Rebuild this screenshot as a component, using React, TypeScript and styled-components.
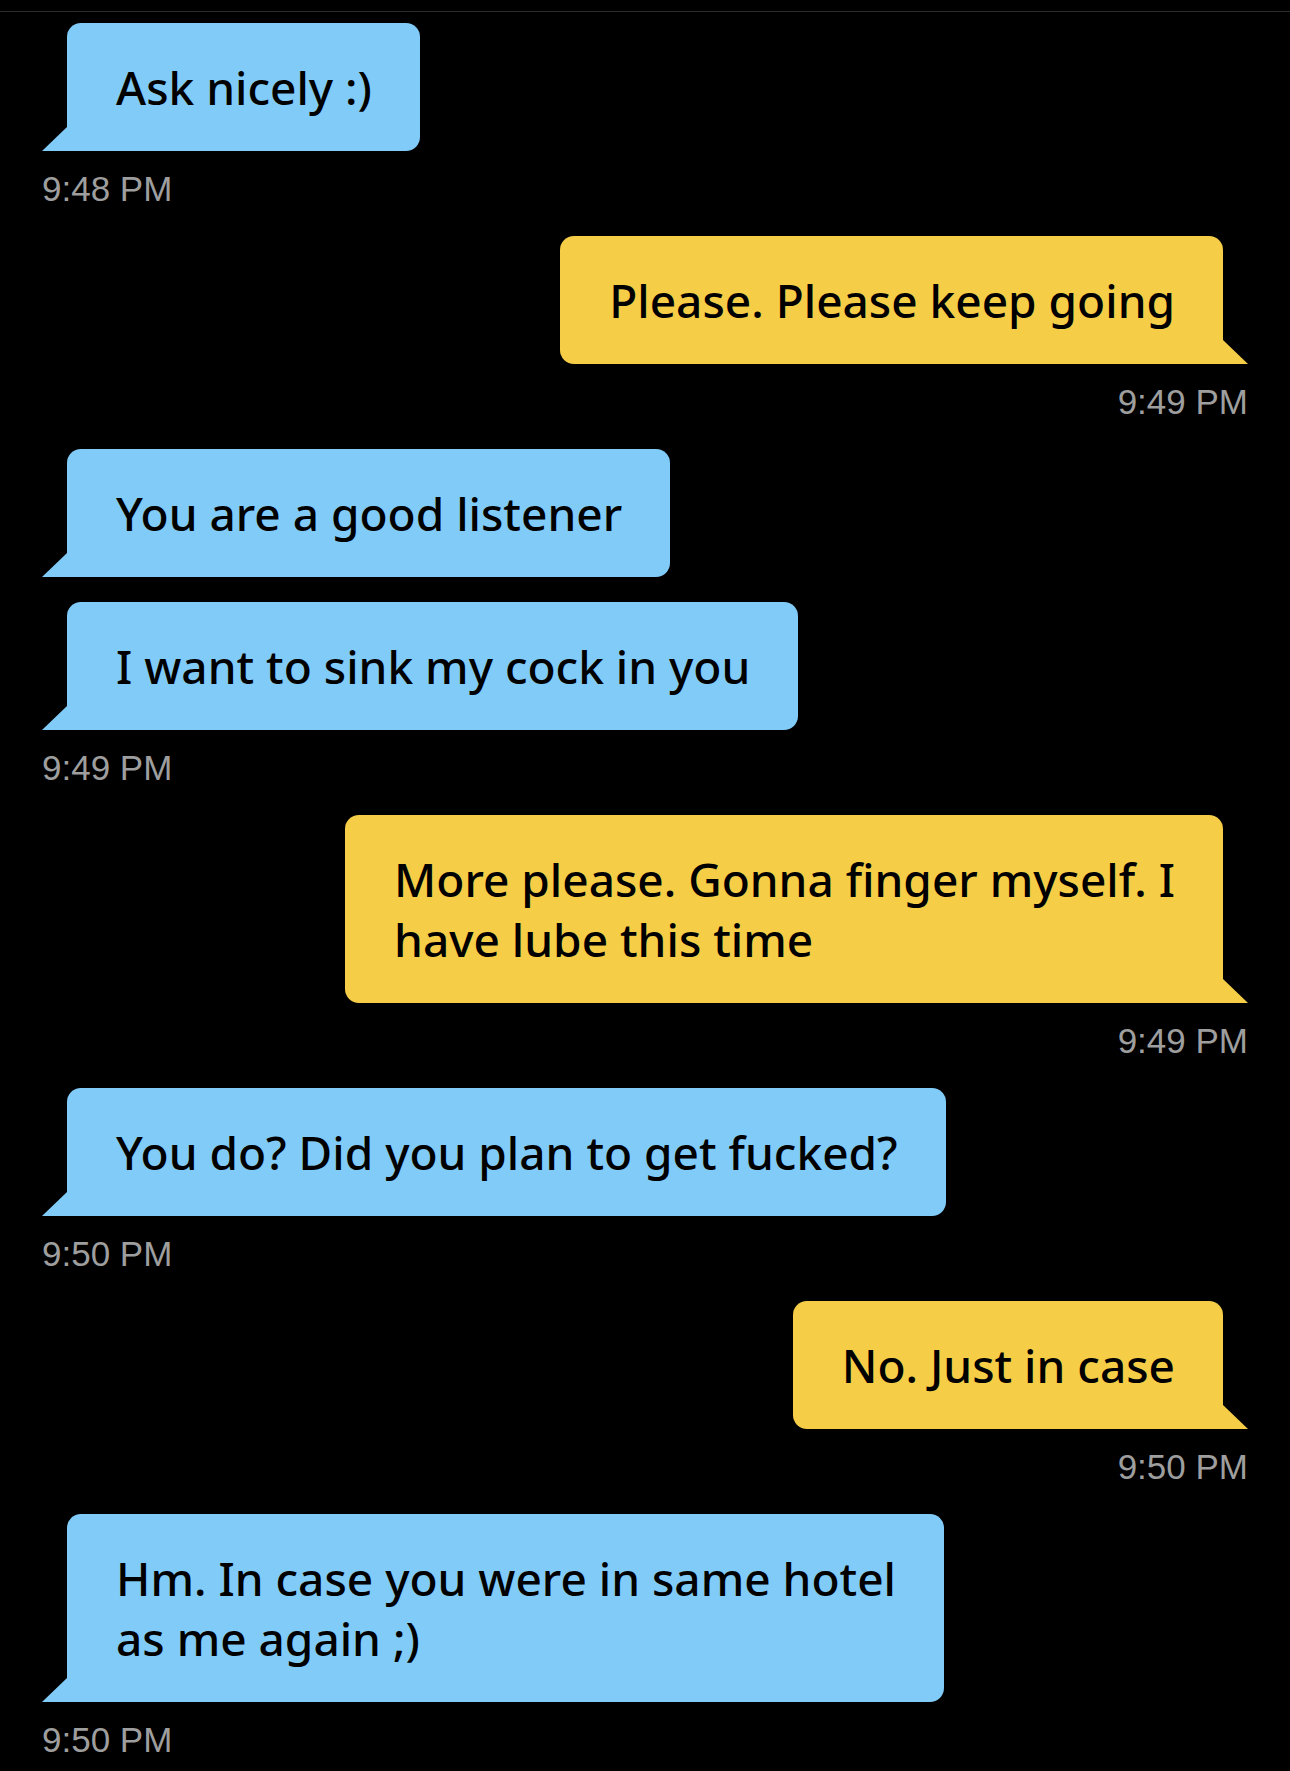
import React from "react";
import styled, { createGlobalStyle } from "styled-components";

const GlobalStyle = createGlobalStyle`
  html, body {
    margin: 0;
    padding: 0;
    background: #000000;
  }
  body {
    font-family: "Noto Sans", "Open Sans", sans-serif;
  }
`;

type Side = "left" | "right";

interface Group {
  side: Side;
  bubbles: string[][];
  time: string;
}

const groups: Group[] = [
  { side: "left", bubbles: [["Ask nicely :)"]], time: "9:48 PM" },
  { side: "right", bubbles: [["Please. Please keep going"]], time: "9:49 PM" },
  {
    side: "left",
    bubbles: [["You are a good listener"], ["I want to sink my cock in you"]],
    time: "9:49 PM",
  },
  {
    side: "right",
    bubbles: [["More please. Gonna finger myself. I", "have lube this time"]],
    time: "9:49 PM",
  },
  {
    side: "left",
    bubbles: [["You do? Did you plan to get fucked?"]],
    time: "9:50 PM",
  },
  { side: "right", bubbles: [["No. Just in case"]], time: "9:50 PM" },
  {
    side: "left",
    bubbles: [["Hm. In case you were in same hotel", "as me again ;)"]],
    time: "9:50 PM",
  },
];

const Screen = styled.div`
  min-height: 1771px;
  background: #000000;
  padding-top: 11px;
  box-sizing: border-box;
`;

const Divider = styled.div`
  height: 1px;
  background: #2c2c2e;
`;

const Thread = styled.div`
  display: flex;
  flex-direction: column;
  padding: 11px 42px 0 42px;
`;

const MessageGroup = styled.div<{ $side: Side }>`
  display: flex;
  flex-direction: column;
  align-items: ${(p) => (p.$side === "left" ? "flex-start" : "flex-end")};
  gap: 25px;
`;

const Bubble = styled.div<{ $side: Side }>`
  position: relative;
  box-sizing: border-box;
  margin: ${(p) => (p.$side === "left" ? "0 0 0 25px" : "0 25px 0 0")};
  padding: 34px 48px 34px 49px;
  border-radius: ${(p) =>
    p.$side === "left" ? "14px 14px 14px 0" : "14px 14px 0 14px"};
  background: ${(p) => (p.$side === "left" ? "#81cbf8" : "#f6cd47")};
  color: #000000;
  font-size: 46px;
  line-height: 60px;
  font-weight: 500;
  white-space: nowrap;

  &::before {
    content: "";
    position: absolute;
    bottom: 0;
    width: 25px;
    height: 24px;
    background: inherit;
    ${(p) =>
      p.$side === "left"
        ? `left: -25px; clip-path: polygon(100% 0, 100% 100%, 0 100%);`
        : `right: -25px; clip-path: polygon(0 0, 100% 100%, 0 100%);`}
  }
`;

const Line = styled.span`
  display: block;
`;

const Timestamp = styled.div`
  margin: 18px 0 27px 0;
  font-family: "Liberation Sans", Arial, sans-serif;
  font-size: 35px;
  line-height: 40px;
  color: #9e9e9e;
`;

export default function App() {
  return (
    <>
      <GlobalStyle />
      <Screen>
        <Divider />
        <Thread>
          {groups.map((g, gi) => (
            <React.Fragment key={gi}>
              <MessageGroup $side={g.side}>
                {g.bubbles.map((lines, bi) => (
                  <Bubble key={bi} $side={g.side}>
                    {lines.map((l, li) => (
                      <Line key={li}>{l}</Line>
                    ))}
                  </Bubble>
                ))}
              </MessageGroup>
              <MessageGroup $side={g.side}>
                <Timestamp>{g.time}</Timestamp>
              </MessageGroup>
            </React.Fragment>
          ))}
        </Thread>
      </Screen>
    </>
  );
}
